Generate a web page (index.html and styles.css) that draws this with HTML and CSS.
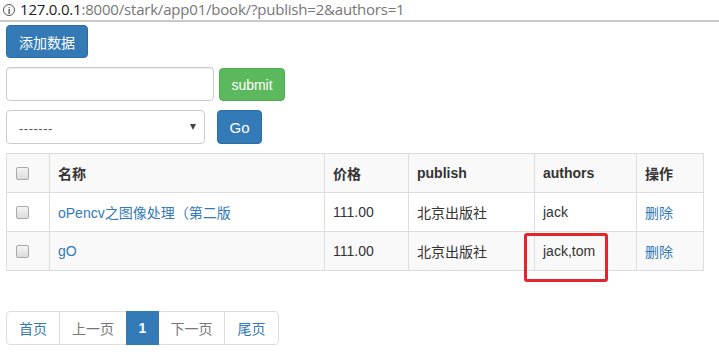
FILE: index.html
```html
<!DOCTYPE html>
<html>
<head>
<meta charset="utf-8">
<link rel="stylesheet" href="styles.css">
</head>
<body>
<div class="urlbar">
  <span class="info">i</span><span class="host">127.0.0.1</span><span class="path">:8000/stark/app01/book/?publish=2&amp;authors=1</span>
</div>
<div class="page">
  <div class="row-add"><a class="btn btn-primary add">添加数据</a></div>
  <form class="row-search">
    <input class="input" type="text">
    <button type="button" class="btn btn-success submit">submit</button>
  </form>
  <div class="row-action">
    <div class="select"><span class="dash">-------</span><span class="caret"></span></div>
    <button type="button" class="btn btn-primary go">Go</button>
  </div>
  <table class="tbl">
    <colgroup>
      <col class="c0"><col class="c1"><col class="c2"><col class="c3"><col class="c4"><col class="c5">
    </colgroup>
    <tr class="odd">
      <th><span class="cb"></span></th><th>名称</th><th>价格</th><th>publish</th><th>authors</th><th>操作</th>
    </tr>
    <tr>
      <td><span class="cb"></span></td><td><a class="lnk">oPencv之图像处理（第二版</a></td><td>111.00</td><td>北京出版社</td><td>jack</td><td><a class="lnk">删除</a></td>
    </tr>
    <tr class="odd">
      <td><span class="cb"></span></td><td><a class="lnk">gO</a></td><td>111.00</td><td>北京出版社</td><td class="mark-cell">jack,tom<span class="redbox"></span></td><td><a class="lnk">删除</a></td>
    </tr>
  </table>
  <ul class="pager">
    <li class="first lnk">首页</li>
    <li class="grey">上一页</li>
    <li class="active">1</li>
    <li class="grey">下一页</li>
    <li class="last lnk">尾页</li>
  </ul>
</div>
</body>
</html>
```

FILE: styles.css
```css
* { box-sizing: border-box; }
html, body { margin: 0; padding: 0; background: #fff; }
body {
  font-family: "Liberation Sans", Arial, "Noto Sans CJK SC", sans-serif;
  font-size: 14px;
  color: #333;
  width: 719px;
  height: 352px;
  overflow: hidden;
}
.urlbar {
  height: 22px;
  border-bottom: 2px solid #c9c9c9;
  display: flex;
  align-items: flex-start;
  padding-left: 3px;
  padding-top: 0;
  font-family: "Open Sans", "Liberation Sans", sans-serif;
  font-size: 15px;
  line-height: 19px;
  letter-spacing: -0.2px;
  white-space: nowrap;
}
.info {
  display: inline-flex;
  align-items: center;
  justify-content: center;
  width: 12px;
  height: 12px;
  border: 1.5px solid #555;
  border-radius: 50%;
  font-size: 9px;
  font-weight: bold;
  line-height: 1;
  letter-spacing: 0;
  color: #555;
  margin-right: 5px;
  margin-top: 4px;
}
.host { color: #222; }
.path { color: #777; }
.page { padding: 0 6px; }
.btn {
  display: inline-flex;
  align-items: center;
  justify-content: center;
  border-radius: 4px;
  color: #fff;
  font-size: 14px;
  border: 1px solid transparent;
  font-family: "Liberation Sans", Arial, "Noto Sans CJK SC", sans-serif;
  padding: 0;
  margin: 0;
}
.btn-primary { background: #337ab7; border-color: #2e6da4; }
.btn-success { background: #5cb85c; border-color: #4cae4c; }
.row-add { padding-top: 3px; height: 45px; }
.add { width: 82px; height: 33px; }
.row-search { display: flex; align-items: flex-start; gap: 5px; margin: 0; height: 43px; }
.input {
  width: 208px; height: 34px;
  border: 1px solid #ccc; border-radius: 4px;
  box-shadow: inset 0 1px 1px rgba(0,0,0,.075);
  margin: 0;
}
.submit { width: 66px; height: 33px; margin-top: 1px; font-size: 14px; }
.row-action { display: flex; align-items: flex-start; gap: 12px; height: 43px; }
.select {
  width: 199px; height: 34px;
  border: 1px solid #ccc; border-radius: 4px;
  display: flex; align-items: center; justify-content: space-between;
  padding: 0 8px 0 12px;
  font-size: 13px; color: #555;
}
.dash { letter-spacing: 0.5px; margin-top: 3px; }
.caret {
  width: 0; height: 0;
  border-left: 3.5px solid transparent; border-right: 3.5px solid transparent;
  border-top: 6px solid #444;
}
.go { width: 45px; height: 34px; font-size: 15px; }
.tbl {
  border-collapse: collapse;
  width: 697px;
  table-layout: fixed;
}
.c0 { width: 43px; } .c1 { width: 275px; } .c2 { width: 84px; }
.c3 { width: 126px; } .c4 { width: 102px; } .c5 { width: 67px; }
.tbl th, .tbl td {
  border: 1px solid #ddd;
  height: 39px;
  padding: 0 8px;
  text-align: left;
  vertical-align: middle;
  white-space: nowrap;
  overflow: visible;
}
.tbl th { font-weight: bold; color: #333; }
.tbl tr.odd { background: #f9f9f9; }
.cb {
  display: block;
  width: 13px; height: 13px;
  border: 1px solid #a9a9a9; border-radius: 2px;
  background: linear-gradient(#f4f4f4, #dcdcdc);
  margin-left: 1px;
}
.lnk { color: #337ab7; text-decoration: none; }
.mark-cell { position: relative; }
.redbox {
  position: absolute;
  left: -11px; top: 1px;
  width: 84px; height: 49px;
  border: 3px solid #e3262b;
  border-radius: 3px;
}
.pager {
  list-style: none; margin: 40px 0 0 0; padding: 0;
  display: flex;
}
.pager li {
  height: 34px;
  display: flex; align-items: center; justify-content: center;
  border: 1px solid #ddd;
  margin-left: -1px;
  background: #fff;
}
.pager li:first-child { margin-left: 0; border-radius: 4px 0 0 4px; width: 54px; }
.pager li:nth-child(2) { width: 68px; }
.pager li:nth-child(3) { width: 33px; }
.pager li:nth-child(4) { width: 67px; }
.pager li:last-child { border-radius: 0 4px 4px 0; width: 55px; }
.pager .grey { color: #777; }
.pager .active { background: #337ab7; border-color: #337ab7; color: #fff; font-weight: bold; z-index: 2; }
```
